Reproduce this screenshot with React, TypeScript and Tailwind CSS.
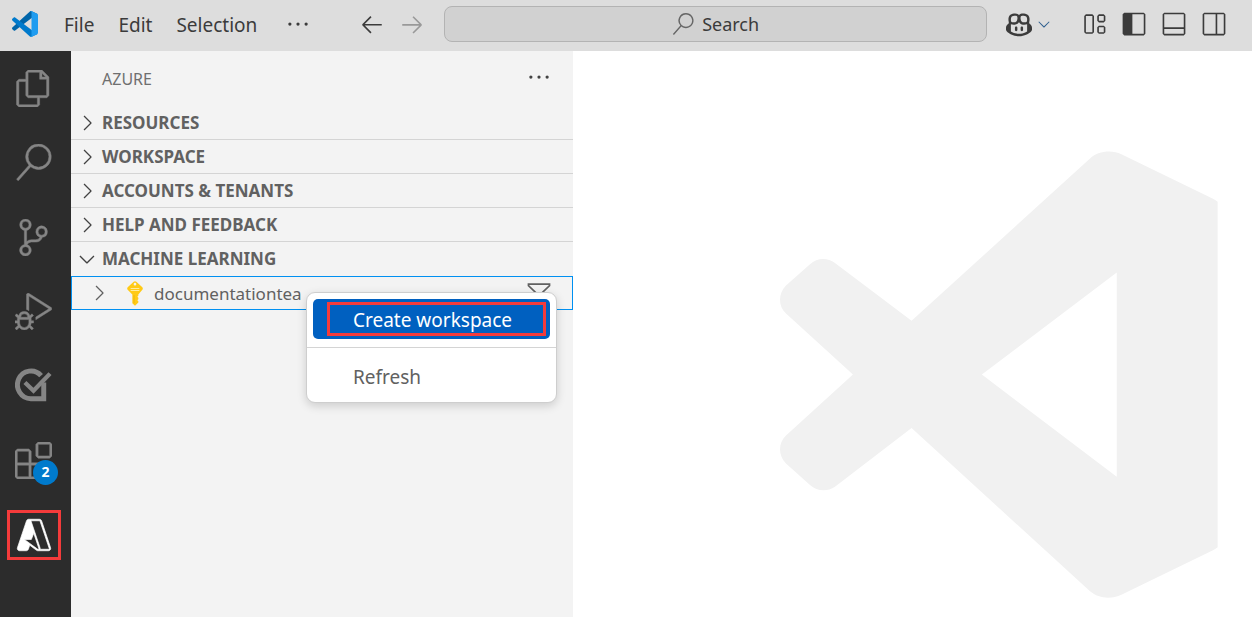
import type { ReactNode } from "react";
import {
  VscArrowLeft,
  VscArrowRight,
  VscAzure,
  VscChevronDown,
  VscChevronRight,
  VscCopilot,
  VscDebugAlt,
  VscEllipsis,
  VscExtensions,
  VscFiles,
  VscFilter,
  VscLayout,
  VscLayoutPanelOff,
  VscLayoutSidebarLeft,
  VscLayoutSidebarRightOff,
  VscSearch,
  VscSourceControl,
} from "react-icons/vsc";

function Logo() {
  return (
    <svg viewBox="0 0 100 100" className="size-[26px] shrink-0" aria-hidden="true">
      <path fill="#0065A9" d="M96.4614 10.7962L75.8569 0.875542C73.4719 -0.272773 70.6217 0.211611 68.75 2.08333L1.29858 63.5832C-0.515693 65.2373 -0.513607 68.0937 1.30308 69.7452L6.81272 74.754C8.29793 76.1042 10.5347 76.2036 12.1338 74.9905L93.3609 13.3699C96.086 11.3026 100 13.2462 100 16.6667V16.4275C100 14.0265 98.6246 11.8378 96.4614 10.7962Z" />
      <path fill="#007ACC" d="M96.4614 89.2038L75.8569 99.1245C73.4719 100.273 70.6217 99.7884 68.75 97.9167L1.29858 36.4169C-0.515693 34.7627 -0.513607 31.9063 1.30308 30.2548L6.81272 25.246C8.29793 23.8958 10.5347 23.7964 12.1338 25.0095L93.3609 86.6301C96.086 88.6974 100 86.7538 100 83.3333V83.5725C100 85.9735 98.6246 88.1622 96.4614 89.2038Z" />
      <path fill="#1F9CF0" d="M75.8578 99.1263C73.4721 100.274 70.6219 99.7885 68.75 97.9166C71.0564 100.223 75 98.5895 75 95.3278V4.67213C75 1.41039 71.0564 -0.223106 68.75 2.08329C70.6219 0.211402 73.4721 -0.273666 75.8578 0.873633L96.4587 10.7807C98.6234 11.8217 100 14.0112 100 16.4132V83.5871C100 85.9891 98.6234 88.1786 96.4586 89.2196L75.8578 99.1263Z" />
    </svg>
  );
}

function Watermark() {
  return (
    <svg viewBox="60 62 1315 1342" className="w-[438px] shrink-0" aria-hidden="true">
      <path
        fill="#f1f1f1"
        fillRule="evenodd"
        d="M455 572L990 85C1013 63 1055 57 1085 72L1360 205Q1368 209 1374 214V1252Q1368 1257 1360 1261L1085 1394C1055 1408 1018 1407 990 1383L455 894L225 1070C203 1085 172 1085 150 1065L78 1000C54 977 54 938 78 916L279 733L78 550C54 528 54 490 78 466L150 402C172 381 203 382 225 398ZM1071 427L666 733L1071 1040Z"
      />
    </svg>
  );
}

function TestCheckIcon() {
  return (
    <svg viewBox="18 20 112 106" className="h-[35px] w-[37px]" fill="none" stroke="currentColor" aria-hidden="true">
      <path strokeWidth="15" d="M97 43A41 42 0 1 0 66 113H105V64" />
      <path strokeWidth="13" d="M48 64L74 89L124 37" />
    </svg>
  );
}

function KeyIcon() {
  return (
    <svg viewBox="0 0 48 74" className="h-[25px] w-4" aria-hidden="true">
      <path
        fill="#ffca16"
        fillRule="evenodd"
        d="M20 2Q24 -1 28 2L46 18Q49 22 46 26L34 40V44L31 47L34 50V54L31 57L34 60V64L24 74L16 66V40L2 26Q-1 22 2 18ZM24 5A4 4 0 1 0 24 13A4 4 0 1 0 24 5Z"
      />
      <path stroke="#fff3bf" strokeWidth="2.5" d="M11 22H37M11 28H37" />
      <path stroke="#e8b000" strokeWidth="2" d="M21 42V66" />
    </svg>
  );
}

const activities: { label: string; icon: ReactNode; badge?: string; framed?: boolean }[] = [
  { label: "Explorer", icon: <VscFiles /> },
  { label: "Search", icon: <VscSearch /> },
  { label: "Source Control", icon: <VscSourceControl /> },
  { label: "Run and Debug", icon: <VscDebugAlt /> },
  { label: "Testing", icon: <TestCheckIcon /> },
  { label: "Extensions", icon: <VscExtensions />, badge: "2" },
  { label: "Azure", icon: <VscAzure />, framed: true },
];

const sections = ["RESOURCES", "WORKSPACE", "ACCOUNTS & TENANTS", "HELP AND FEEDBACK"];

function TitleBar() {
  return (
    <header className="flex h-[51px] shrink-0 items-center bg-[#dddddd] pb-[3px] pl-3 pr-[25px] text-[#3b3b3b]">
      <Logo />
      <nav className="ml-[26px] flex items-center gap-6 pt-0.5 text-[19px]">
        <button>File</button>
        <button>Edit</button>
        <button>Selection</button>
      </nav>
      <button aria-label="More menus" className="ml-7 text-[26px]">
        <VscEllipsis />
      </button>
      <div className="ml-12 flex items-center gap-[14px] text-[26px]">
        <button aria-label="Go back">
          <VscArrowLeft />
        </button>
        <button aria-label="Go forward" className="text-[#999999]">
          <VscArrowRight />
        </button>
      </div>
      <button className="ml-[19px] flex h-9 min-w-0 flex-1 items-center justify-center gap-2 rounded-lg border border-[#b3b3b3] bg-[#d1d1d1] text-[18px]">
        <VscSearch className="size-[22px] text-[#666666]" />
        Search
      </button>
      <button aria-label="Copilot" className="ml-[19px] flex items-center gap-[3px]">
        <VscCopilot className="size-[26px]" />
        <VscChevronDown className="size-[18px] text-[#2f5f8f]" />
      </button>
      <div className="ml-7 flex items-center gap-[14px] text-[26px]">
        <button aria-label="Customize layout">
          <VscLayout />
        </button>
        <button aria-label="Toggle primary side bar">
          <VscLayoutSidebarLeft />
        </button>
        <button aria-label="Toggle panel">
          <VscLayoutPanelOff />
        </button>
        <button aria-label="Toggle secondary side bar">
          <VscLayoutSidebarRightOff />
        </button>
      </div>
    </header>
  );
}

function ActivityBar() {
  return (
    <nav className="w-[71px] shrink-0 bg-[#2c2c2c]">
      <div className="grid h-[521px] auto-rows-fr pr-1">
        {activities.map((a) => (
          <button key={a.label} aria-label={a.label} className="flex items-center justify-center text-[#858585]">
            <span
              className={
                a.framed
                  ? "flex h-[50px] w-[54px] items-center justify-center border-3 border-[#f43b3b] text-[36px] text-white [&>svg]:[stroke-width:0.3]"
                  : "relative text-[37px] [&>svg]:[stroke-width:0.3]"
              }
            >
              {a.icon}
              {a.badge && (
                <span className="absolute -bottom-[6px] -right-[6px] flex size-[25px] items-center justify-center rounded-full bg-[#007acc] text-[14px] font-bold leading-none text-white">
                  {a.badge}
                </span>
              )}
            </span>
          </button>
        ))}
      </div>
    </nav>
  );
}

function ContextMenu() {
  return (
    <div
      role="menu"
      className="absolute left-[234px] top-[15px] z-10 w-[251px] rounded-[9px] border border-[#cecece] bg-white py-[6px] text-[19px] shadow-[0_3px_10px_rgba(0,0,0,0.16)]"
    >
      <div className="px-[6px]">
        <button role="menuitem" className="flex h-10 w-full rounded-[5px] bg-[#0060c0] py-[3px] pl-[14px] pr-1 text-white">
          <span className="flex h-full w-full items-center border-3 border-[#f43b3b] pl-[23px] pt-0.5">Create workspace</span>
        </button>
      </div>
      <hr className="mt-2 border-[#d4d4d4]" />
      <button role="menuitem" className="flex h-12 w-full items-center pl-[46px] pt-[10px] text-[#616161]">
        Refresh
      </button>
    </div>
  );
}

function SideBar() {
  return (
    <aside className="w-[502px] shrink-0 bg-[#f3f3f3] text-[#616161]">
      <div className="flex h-[55px] items-center justify-between pl-[31px] pr-[21px] text-[16px]">
        <h2 className="text-[#6f6f6f]">AZURE</h2>
        <button aria-label="Views and more actions" className="pb-[3px] text-[26px] text-[#424242]">
          <VscEllipsis />
        </button>
      </div>
      {sections.map((s) => (
        <button key={s} className="flex h-[34px] w-full items-center gap-[3px] border-b border-[#d4d4d4] pl-1 text-[17px] font-bold">
          <VscChevronRight className="size-6 shrink-0 text-[#424242]" />
          {s}
        </button>
      ))}
      <button className="flex h-[34px] w-full items-center gap-[3px] pl-1 text-[17px] font-bold">
        <VscChevronDown className="size-6 shrink-0 text-[#424242]" />
        MACHINE LEARNING
      </button>
      <div className="relative flex h-[34px] items-center border border-[#0090f1] pl-[15px] pr-5 text-[17px]">
        <VscChevronRight className="size-6 shrink-0" />
        <span className="ml-4">
          <KeyIcon />
        </span>
        <span className="ml-[11px] flex-1 pt-0.5">documentationtea</span>
        <button aria-label="Filter" className="text-[26px]">
          <VscFilter />
        </button>
        <ContextMenu />
      </div>
    </aside>
  );
}

export default function App() {
  return (
    <div className="flex min-h-screen flex-col bg-white font-['Noto_Sans',sans-serif]">
      <TitleBar />
      <div className="flex flex-1">
        <ActivityBar />
        <SideBar />
        <main className="flex min-w-0 flex-1 items-start justify-end pr-[34px] pt-[100px]">
          <Watermark />
        </main>
      </div>
    </div>
  );
}
